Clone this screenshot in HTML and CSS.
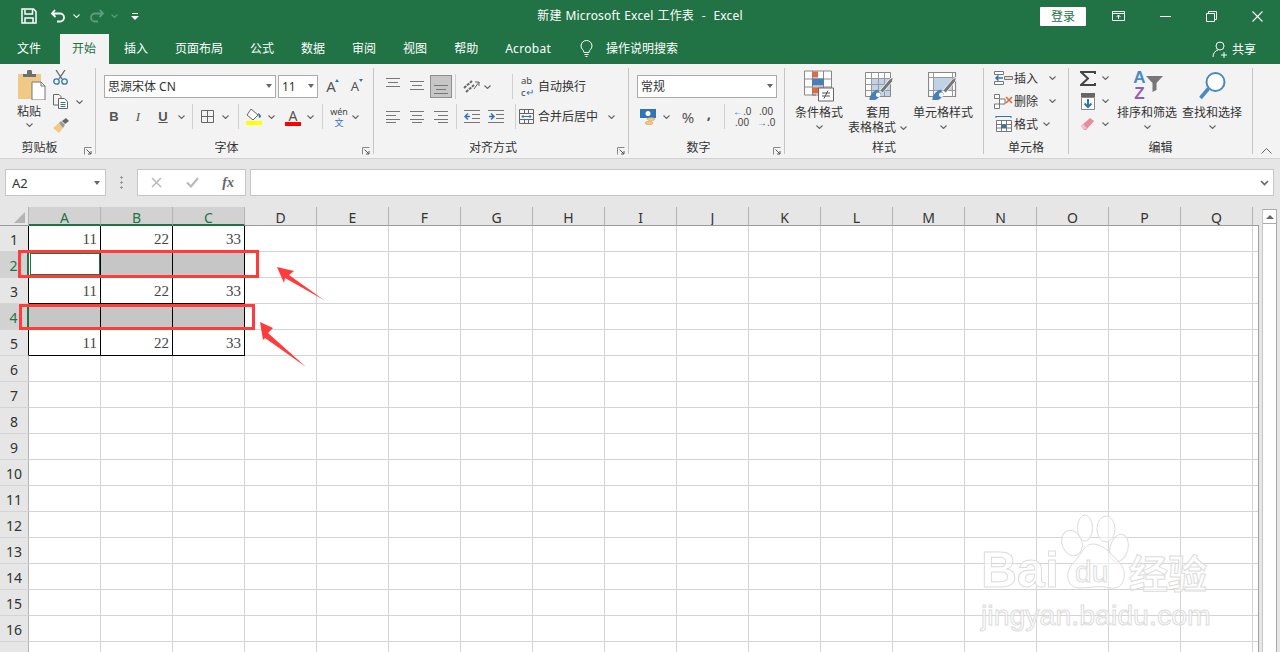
FILE: index.html
```html
<!DOCTYPE html>
<html lang="zh-CN">
<head>
  <meta charset="UTF-8">
  <title>新建 Microsoft Excel 工作表 - Excel</title>
  <link rel="stylesheet" href="styles.css">
</head>
<body>

  <!-- shared small glyphs -->
  <svg class="defs" width="0" height="0">
    <symbol id="chev" viewBox="0 0 7 4"><path d="M.5.5 3.5 3.5 6.5.5" fill="none" stroke="#666" stroke-width="1.1"/></symbol>
    <symbol id="launch" viewBox="0 0 8 8"><path d="M.5 7.5V.5H7.5" fill="none" stroke="#888"/><path d="M2.5 2.5 7 7M7 4V7H4" fill="none" stroke="#555"/></symbol>
    <symbol id="lines" viewBox="0 0 14 12"><path d="M0 .5H14M2 4.5H12M0 8.5H14" stroke="#777" fill="none"/></symbol>
    <symbol id="paint" viewBox="0 0 32 34">
      <path d="M4 33c0-6 4-10 9-12l4 5c-2 4-5 7-9 7z" fill="#4a7fb5"/>
      <circle cx="14" cy="27" r="2.6" fill="#fff"/>
      <path d="M16 22 27 9l4-2-1 5-11 13z" fill="#777" stroke="#f3f3f3"/>
    </symbol>
  </svg>

  <!-- Title bar -->
  <div class="titlebar">
    <div class="qat">
      <svg class="qat-save" width="16" height="16" viewBox="0 0 16 16"><path d="M1 1H12.5L15 3.5V15H1z" fill="none" stroke="#fff" stroke-width="1.5"/><path d="M4 1.5V6H11.5V1.5M4 15V10H12V15" fill="none" stroke="#fff" stroke-width="1.5"/></svg>
      <svg class="qat-undo" width="15" height="14" viewBox="0 0 15 14"><path d="M4 1 1 4.5 4.5 8M1.5 4.5H9a4 4 0 0 1 0 8H6" fill="none" stroke="#fff" stroke-width="1.8"/></svg>
      <svg class="qat-chev" width="7" height="4"><path d="M.5.5 3.5 3.5 6.5.5" fill="none" stroke="#dfe" stroke-width="1.1"/></svg>
      <svg class="qat-redo" width="15" height="14" viewBox="0 0 15 14"><path d="M11 1 14 4.5 10.5 8M13.5 4.5H6a4 4 0 0 0 0 8H9" fill="none" stroke="#5f9b7d" stroke-width="1.8"/></svg>
      <svg class="qat-chev" width="7" height="4"><path d="M.5.5 3.5 3.5 6.5.5" fill="none" stroke="#5f9b7d" stroke-width="1.1"/></svg>
      <svg class="qat-more" width="8" height="7" viewBox="0 0 8 7"><path d="M1 .5H7" stroke="#fff"/><path d="M0 3H8L4 7z" fill="#fff"/></svg>
    </div>
    <div class="doc-title">新建 Microsoft Excel 工作表&nbsp; -&nbsp; Excel</div>
    <div class="win-controls">
      <div class="login">登录</div>
      <svg class="win-display" width="13" height="10" viewBox="0 0 13 10"><path d="M.5.5H12.5V9.5H.5zM.5 2.5H12.5" fill="none" stroke="#fff"/><path d="M6.5 8V4M4.5 6 6.5 4 8.5 6" fill="none" stroke="#fff"/></svg>
      <svg class="win-min" width="11" height="1"><path d="M0 .5H11" stroke="#fff"/></svg>
      <svg class="win-max" width="11" height="11" viewBox="0 0 11 11"><path d="M.5 2.5H8.5V10.5H.5zM2.5 2.5V.5H10.5V8.5H8.5" fill="none" stroke="#fff"/></svg>
      <svg class="win-close" width="11" height="11" viewBox="0 0 11 11"><path d="M.5.5 10.5 10.5M10.5.5 .5 10.5" stroke="#fff" stroke-width="1.1"/></svg>
    </div>
  </div>

  <!-- Tabs -->
  <div class="tabs">
    <div class="tab tab-file">文件</div>
    <div class="tab active">开始</div>
    <div class="tab">插入</div>
    <div class="tab">页面布局</div>
    <div class="tab">公式</div>
    <div class="tab">数据</div>
    <div class="tab">审阅</div>
    <div class="tab">视图</div>
    <div class="tab">帮助</div>
    <div class="tab tab-latin">Acrobat</div>
    <svg class="bulb" width="13" height="17" viewBox="0 0 13 17"><path d="M4 12.5C4 10 1 9 1 6a5.5 5.5 0 0 1 11 0c0 3-3 4-3 6.5zM4.5 14.5H8.5M5.5 16.5H7.5" fill="none" stroke="#fff"/></svg>
    <div class="tab-search">操作说明搜索</div>
    <div class="share">
      <svg width="17" height="17" viewBox="0 0 17 17"><circle cx="8" cy="5" r="4" fill="none" stroke="#fff"/><path d="M1 16c0-4 2.5-6.5 5-7M12 11V17M9 14H15" fill="none" stroke="#fff"/></svg>
      共享
    </div>
  </div>

  <!-- Ribbon -->
  <div class="ribbon">

    <section class="group g-clip has-launcher">
      <div class="clip-body">
        <div class="paste">
          <svg width="29" height="30" viewBox="0 0 29 30">
            <path d="M1 4H24V29H1z" fill="#f0c987"/>
            <path d="M6 7V4H10V2a2.5 2.5 0 0 1 5 0V4H19V7z" fill="#6f6f6f"/>
            <path d="M15 12H24L28 16V30H15z" fill="#fff" stroke="#777"/><path d="M24 12V16H28" fill="none" stroke="#777"/>
          </svg>
          <span class="big-text">粘贴</span>
          <svg class="chev"><use href="#chev"/></svg>
        </div>
        <div class="clip-tools">
          <svg width="15" height="15" viewBox="0 0 15 15"><path d="M3 0 9 9M12 0 6 9" stroke="#666" stroke-width="1.3" fill="none"/><circle cx="3.5" cy="11.5" r="2.7" fill="none" stroke="#2f75b5" stroke-width="1.3"/><circle cx="11.5" cy="11.5" r="2.7" fill="none" stroke="#2f75b5" stroke-width="1.3"/></svg>
          <div class="tool-line">
            <svg width="15" height="15" viewBox="0 0 15 15"><path d="M.5.5H6L8 2.5V11H.5z" fill="#f3f3f3" stroke="#666"/><path d="M5.5 4.5H11.5L14.5 7.5V14.5H5.5z" fill="#fff" stroke="#666"/><path d="M7.5 8.5H12.5M7.5 10.5H12.5M7.5 12.5H12.5" stroke="#2f75b5"/></svg>
            <svg class="chev"><use href="#chev"/></svg>
          </div>
          <svg width="16" height="15" viewBox="0 0 16 15"><path d="M0 10 6 5 10 10 6 15C4 13 2 12 0 10z" fill="#f0c987"/><path d="M6 5 8 3 12 7 10 10z" fill="#999"/><path d="M9 3 13 0 16 3 12 6z" fill="#666"/></svg>
        </div>
      </div>
      <div class="group-label">剪贴板</div>
      <svg class="launcher"><use href="#launch"/></svg>
    </section>

    <section class="group g-font has-launcher">
      <div class="row row-top">
        <div class="combo combo-font">思源宋体 CN<i class="caret"></i></div>
        <div class="combo combo-size">11<i class="caret"></i></div>
        <div class="font-grow">A<i class="tri tri-up"></i></div>
        <div class="font-grow small">A<i class="tri tri-down"></i></div>
      </div>
      <div class="row row-low">
        <span class="tool fmt bold">B</span>
        <span class="tool fmt ital">I</span>
        <span class="tool fmt under">U</span>
        <svg class="chev chev-under"><use href="#chev"/></svg>
        <i class="vsep vsep-border"></i>
        <svg width="13" height="13" viewBox="0 0 13 13"><path d="M.5.5H12.5V12.5H.5zM6.5.5V12.5M.5 6.5H12.5" fill="none" stroke="#666"/></svg>
        <svg class="chev chev-border"><use href="#chev"/></svg>
        <i class="vsep vsep-fill"></i>
        <svg class="glyph-fill" width="16" height="16" viewBox="0 0 16 16"><path d="M5 0 12 6 7 11 1 6z" fill="#fff" stroke="#666"/><path d="M12 4c2 1 3 2 3 4l-2 1z" fill="#2f75b5"/><path d="M0 12H16V16H0z" fill="#ffff00"/></svg>
        <svg class="chev chev-fill"><use href="#chev"/></svg>
        <span class="font-color">A<i></i></span>
        <svg class="chev chev-color"><use href="#chev"/></svg>
        <i class="vsep vsep-wen"></i>
        <span class="wen">wén<b>文</b></span>
        <svg class="chev chev-wen"><use href="#chev"/></svg>
      </div>
      <div class="group-label">字体</div>
      <svg class="launcher"><use href="#launch"/></svg>
    </section>

    <section class="group g-align has-launcher">
      <div class="row row-top">
        <svg class="al al-first" width="14" height="12"><use href="#lines"/></svg>
        <svg class="al al-mid" width="14" height="12"><use href="#lines"/></svg>
        <div class="al-active"><svg width="14" height="12"><use href="#lines"/></svg></div>
        <i class="vsep vsep-orient"></i>
        <svg class="orient" width="17" height="15" viewBox="0 0 17 15"><path d="M1 9 9 2M3 13 11 6" stroke="#666" stroke-width="2" stroke-dasharray="3 1" fill="none"/><path d="M11 10 16 3M12 3H16V7" stroke="#666" fill="none"/></svg>
        <svg class="chev chev-orient"><use href="#chev"/></svg>
        <i class="vsep vsep-wrap"></i>
        <span class="wrap-ic">ab<br>c<em>↵</em></span>
        <span class="al-label">自动换行</span>
      </div>
      <div class="row row-low">
        <svg class="al al-first" width="14" height="12" viewBox="0 0 14 12"><path d="M0 .5H14M0 4.5H10M0 8.5H14M0 11.5H10" stroke="#777"/></svg>
        <svg class="al al-mid" width="14" height="12" viewBox="0 0 14 12"><path d="M0 .5H14M2 4.5H12M0 8.5H14M2 11.5H12" stroke="#777"/></svg>
        <svg class="al al-right" width="14" height="12" viewBox="0 0 14 12"><path d="M0 .5H14M4 4.5H14M0 8.5H14M4 11.5H14" stroke="#777"/></svg>
        <i class="vsep vsep-indent"></i>
        <svg class="indent" width="16" height="13" viewBox="0 0 16 13"><path d="M0 .5H16M8 4.5H16M8 8.5H16M0 12.5H16" stroke="#777"/><path d="M6 6.5H1M4 3.5 1 6.5 4 9.5" fill="none" stroke="#2f75b5" stroke-width="1.5"/></svg>
        <svg class="indent indent2" width="16" height="13" viewBox="0 0 16 13"><path d="M0 .5H16M8 4.5H16M8 8.5H16M0 12.5H16" stroke="#777"/><path d="M1 6.5H6M3 3.5 6 6.5 3 9.5" fill="none" stroke="#2f75b5" stroke-width="1.5"/></svg>
        <i class="vsep vsep-merge"></i>
        <svg class="merge" width="15" height="15" viewBox="0 0 15 15"><path d="M.5.5H14.5V14.5H.5zM.5 4.5H14.5M.5 10.5H14.5M5.5.5V4.5M9.5.5V4.5M5.5 10.5V14.5M9.5 10.5V14.5" fill="none" stroke="#666"/><path d="M3 7.5H12M4.5 6 3 7.5 4.5 9M10.5 6 12 7.5 10.5 9" fill="none" stroke="#2f75b5"/></svg>
        <span class="al-label">合并后居中</span>
        <svg class="chev chev-merge"><use href="#chev"/></svg>
      </div>
      <div class="group-label">对齐方式</div>
      <svg class="launcher"><use href="#launch"/></svg>
    </section>

    <section class="group g-num has-launcher">
      <div class="row row-top">
        <div class="combo combo-num">常规<i class="caret"></i></div>
      </div>
      <div class="row row-low">
        <svg width="17" height="16" viewBox="0 0 17 16"><path d="M0 0H16V9H0z" fill="#2f75b5"/><circle cx="8" cy="4.5" r="2.5" fill="#fff"/><ellipse cx="11" cy="10" rx="4" ry="1.5" fill="#f0c987" stroke="#c99a45" stroke-width=".5"/><ellipse cx="9" cy="14" rx="4" ry="1.7" fill="#f0c987" stroke="#c99a45" stroke-width=".5"/></svg>
        <svg class="chev chev-cur"><use href="#chev"/></svg>
        <span class="pct">%</span>
        <span class="comma">,</span>
        <i class="vsep vsep-dec"></i>
        <span class="dec"><em>←</em>.0<br>.00</span>
        <span class="dec">.00<br><em>→</em>.0</span>
      </div>
      <div class="group-label">数字</div>
      <svg class="launcher"><use href="#launch"/></svg>
    </section>

    <section class="group g-style">
      <div class="big-row">
        <div class="big big-cond">
          <svg width="30" height="31" viewBox="0 0 30 31">
            <path d="M.5.5H27.5V24.5H.5zM.5 8.5H27.5M.5 16.5H27.5M8.5.5V24.5M19.5.5V24.5" fill="#fff" stroke="#888"/>
            <path d="M8 1H14V7H8zM8 17H19V23H8z" fill="#dc6a47"/><path d="M8 8H20V15H8zM8 24H12V25H8z" fill="#4a7fb5"/>
            <path d="M14.5 17.5H29.5V30.5H14.5z" fill="#fff" stroke="#666"/>
            <path d="M18 22.5H26M18 25.5H26M24 20 20 28" stroke="#555" fill="none"/>
          </svg>
          <span class="big-text">条件格式</span>
          <svg class="chev"><use href="#chev"/></svg>
        </div>
        <div class="big big-table">
          <svg width="30" height="30" viewBox="0 0 30 30">
            <path d="M.5 1.5H25.5V25.5H.5z" fill="#fff" stroke="#888"/>
            <path d="M7 8H25V25H7z" fill="#bfd2e8"/>
            <path d="M.5 7.5H25.5M.5 13.5H25.5M.5 19.5H25.5M6.5 1.5V25.5M13.5 1.5V25.5M19.5 1.5V25.5" fill="none" stroke="#999"/>
            <use href="#paint" x="0" y="0" width="30" height="30"/>
          </svg>
          <span class="big-text table-top">套用</span>
          <span class="big-text table-low">表格格式<svg class="chev chev-inline"><use href="#chev"/></svg></span>
        </div>
        <div class="big big-cell">
          <svg width="30" height="30" viewBox="0 0 30 30">
            <path d="M.5 1.5H27.5V25.5H.5z" fill="#fff" stroke="#888" stroke-width="1.2"/>
            <path d="M5.5 6.5H24V19H5.5z" fill="#bfd2e8"/>
            <path d="M.5 6.5H27.5M.5 19.5H27.5M5.5 1.5V25.5M24.5 1.5V25.5" fill="none" stroke="#999"/>
            <use href="#paint" x="0" y="0" width="30" height="30"/>
          </svg>
          <span class="big-text">单元格样式</span>
          <svg class="chev"><use href="#chev"/></svg>
        </div>
      </div>
      <div class="group-label">样式</div>
    </section>

    <section class="group g-cells">
      <div class="cell-tool">
        <svg width="20" height="14" viewBox="0 0 20 14"><path d="M.5.5H9.5V3.5H.5zM.5 10.5H9.5V13.5H.5z" fill="#fff" stroke="#777"/><path d="M10.5 5.5H18.5V8.5H10.5z" fill="#ddd" stroke="#777"/><path d="M9 7H2M4.5 4.5 2 7 4.5 9.5" stroke="#2f75b5" stroke-width="1.5" fill="none"/></svg>
        <span>插入</span><svg class="chev chev-insert"><use href="#chev"/></svg>
      </div>
      <div class="cell-tool">
        <svg width="20" height="15" viewBox="0 0 20 15"><path d="M.5.5H5.5V4.5H.5zM.5 10H5.5V14.5H.5zM5.5 5H11V10H5.5z" fill="#fff" stroke="#777"/><path d="M12 3 18 9M18 3 12 9" stroke="#dc6a47" stroke-width="1.6"/></svg>
        <span>删除</span><svg class="chev chev-insert"><use href="#chev"/></svg>
      </div>
      <div class="cell-tool">
        <svg width="16" height="16" viewBox="0 0 16 16"><path d="M0 .5H15M0 0V2M15 0V2" stroke="#2f75b5"/><path d="M.5 4.5H15.5V15.5H.5zM.5 8.5H15.5M.5 12H15.5M5.5 4.5V15.5M10.5 4.5V15.5" fill="#fff" stroke="#777"/><path d="M5 9H10V12H5z" fill="#2f75b5"/></svg>
        <span>格式</span><svg class="chev chev-format"><use href="#chev"/></svg>
      </div>
      <div class="group-label">单元格</div>
    </section>

    <section class="group g-edit">
      <div class="edit-body">
        <div class="edit-tools">
          <div class="edit-line">
            <svg width="16" height="15" viewBox="0 0 16 15"><path d="M15 3V1H1L8 7.5 1 14H15V12" fill="none" stroke="#444" stroke-width="2"/></svg>
            <svg class="chev"><use href="#chev"/></svg>
          </div>
          <div class="edit-line">
            <svg width="14" height="17" viewBox="0 0 14 17"><path d="M0 0H14V4H0z" fill="#666"/><path d="M.5 4.5H13.5V16.5H.5z" fill="#fff" stroke="#888"/><path d="M7 6V14M3.5 10.5 7 14 10.5 10.5" fill="none" stroke="#2f75b5" stroke-width="2"/></svg>
            <svg class="chev"><use href="#chev"/></svg>
          </div>
          <div class="edit-line">
            <svg width="14" height="14" viewBox="0 0 14 14"><path d="M0 9 9 1 13 4 5 13H3z" fill="#e98a9b"/><path d="M6 11 3 13 0 9 2 7z" fill="#f3c1ca"/></svg>
            <svg class="chev"><use href="#chev"/></svg>
          </div>
        </div>
        <div class="big big-sort">
          <div class="sort-ic"><span class="az"><b>A</b><b class="z">Z</b></span>
            <svg width="17" height="17" viewBox="0 0 17 17"><path d="M0 1H17L10.5 8V15L6.5 17V8z" fill="#777"/></svg>
          </div>
          <span class="big-text">排序和筛选</span>
          <svg class="chev"><use href="#chev"/></svg>
        </div>
        <div class="big big-find">
          <svg width="28" height="29" viewBox="0 0 28 29"><circle cx="17.5" cy="10.5" r="9" fill="#fff" stroke="#4a8ac4" stroke-width="2"/><path d="M10.5 17 2.5 26.5" stroke="#4a8ac4" stroke-width="3.5"/></svg>
          <span class="big-text">查找和选择</span>
          <svg class="chev"><use href="#chev"/></svg>
        </div>
      </div>
      <div class="group-label">编辑</div>
    </section>

    <svg class="collapse" width="11" height="6" viewBox="0 0 11 6"><path d="M.5 5.5 5.5.5 10.5 5.5" fill="none" stroke="#666"/></svg>
  </div>

  <!-- Formula bar -->
  <div class="formula-bar">
    <div class="name-box">A2<i class="caret"></i></div>
    <div class="grip"></div>
    <div class="fx-box">
      <svg width="11" height="11" viewBox="0 0 11 11"><path d="M1 1 10 10M10 1 1 10" stroke="#b8b8b8" stroke-width="1.5"/></svg>
      <svg width="13" height="11" viewBox="0 0 13 11"><path d="M1 5.5 5 9.5 12 1" fill="none" stroke="#b8b8b8" stroke-width="2"/></svg>
      <span class="fx">fx</span>
    </div>
    <div class="formula-input"><svg width="9" height="6" viewBox="0 0 9 6"><path d="M1 1 4.5 4.5 8 1" fill="none" stroke="#666" stroke-width="1.6"/></svg></div>
  </div>

  <!-- Sheet -->
  <div class="sheet-area">
    <div class="grid">
      <div class="corner"><svg width="11" height="11"><path d="M11 0V11H0z" fill="#b4b4b4"/></svg></div>
      <div class="col sel">A</div><div class="col sel">B</div><div class="col sel">C</div>
      <div class="col">D</div><div class="col">E</div><div class="col">F</div><div class="col">G</div>
      <div class="col">H</div><div class="col">I</div><div class="col">J</div><div class="col">K</div>
      <div class="col">L</div><div class="col">M</div><div class="col">N</div><div class="col">O</div>
      <div class="col">P</div><div class="col">Q</div><div class="col col-rest"></div>

      <div class="rh data">1</div><div class="cell">11</div><div class="cell">22</div><div class="cell">33</div>
      <div class="rh data sel">2</div><div class="cell active"><div class="cursor"></div></div><div class="cell grey"></div><div class="cell grey"></div>
      <div class="rh data">3</div><div class="cell">11</div><div class="cell">22</div><div class="cell">33</div>
      <div class="rh data sel">4</div><div class="cell grey"></div><div class="cell grey"></div><div class="cell grey"></div>
      <div class="rh data">5</div><div class="cell">11</div><div class="cell">22</div><div class="cell">33</div>
      <div class="rh">6</div>
      <div class="rh">7</div>
      <div class="rh">8</div>
      <div class="rh">9</div>
      <div class="rh">10</div>
      <div class="rh">11</div>
      <div class="rh">12</div>
      <div class="rh">13</div>
      <div class="rh">14</div>
      <div class="rh">15</div>
      <div class="rh">16</div>
      <div class="rh"></div>

      <!-- annotations drawn over the grid -->
      <div class="mark mark-1"></div>
      <div class="mark mark-2"></div>
      <svg class="arrows" width="340" height="180" viewBox="0 207 340 180">
        <path d="M277 267 294 271 289 275 324 300 285 278 284 283z" fill="#ff3b3b"/>
        <path d="M260 322 273 328 268 333 306 367 265 338 263 340z" fill="#ff3b3b"/>
      </svg>

      <!-- watermark -->
      <div class="watermark">
        <svg class="wm-paw" width="70" height="80" viewBox="0 0 70 80">
          <g fill="rgba(255,255,255,.5)" stroke="#dcdcdc">
            <ellipse cx="12" cy="31" rx="10" ry="13" transform="rotate(-20 12 31)"/>
            <ellipse cx="25" cy="16" rx="7.5" ry="13"/>
            <ellipse cx="46" cy="17" rx="9" ry="13"/>
            <ellipse cx="59" cy="36" rx="9" ry="14" transform="rotate(15 59 36)"/>
            <path d="M33 32C24 32 22 42 14 50 4 60 6 76 20 76 30 76 38 73 50 76 62 78 68 66 62 54 54 44 44 32 33 32z"/>
          </g>
        </svg>
        <span class="wm-bai">Bai</span>
        <span class="wm-du">du</span>
        <span class="wm-jy">经验</span>
        <span class="wm-url">jingyan.baidu.com</span>
      </div>
    </div>
    <div class="gutter"></div>
    <div class="scrollbar"><div class="scroll-up"><i></i></div></div>
  </div>

</body>
</html>
```

FILE: styles.css
```css
* {
  box-sizing: border-box;
}

html, body {
  margin: 0;
  height: 652px;
  overflow: hidden;
}

body {
  display: flex;
  flex-direction: column;
  font-family: "Noto Sans", "Noto Sans CJK SC", sans-serif;
  font-size: 12px;
  color: #333;
  background-color: #e6e6e6;
}

i, em {
  font-style: normal;
}

.defs {
  position: absolute;
}

/* Title bar */
.titlebar {
  flex: none;
  height: 32px;
  background-color: #217346;
  color: white;
  display: grid;
  grid-template-columns: 1fr auto 1fr;
  align-items: center;
}

.qat {
  display: flex;
  align-items: center;
  padding-left: 21px;
}

.qat-undo { margin-left: 14px; }
.qat-chev { margin-left: 7px; }
.qat-redo { margin-left: 9px; }
.qat-more { margin-left: 13px; }

.doc-title {
  font-size: 12px;
  line-height: 32px;
  word-spacing: 0.5px;
  letter-spacing: 0.2px;
  white-space: nowrap;
}

.win-controls {
  display: flex;
  align-items: center;
  justify-content: flex-end;
  padding-right: 17px;
}

.login {
  width: 46px;
  height: 19px;
  line-height: 19px;
  text-align: center;
  background-color: white;
  color: #217346;
  border-radius: 1px;
}

.win-display { margin-left: 26px; }
.win-min { margin-left: 35px; }
.win-max { margin-left: 35px; }
.win-close { margin-left: 35px; }

/* Tabs */
.tabs {
  flex: none;
  height: 32px;
  padding-left: 3.5px;
  background-color: #217346;
  color: white;
  display: flex;
  align-items: flex-end;
}

.tab {
  height: 30px;
  line-height: 29px;
  padding: 0 13.5px;
  white-space: nowrap;
}

.tab-file {
  margin-right: 5px;
}

.tab-latin {
  letter-spacing: 0.3px;
}

.tab.active {
  background-color: #f3f3f3;
  color: #217346;
  padding: 0 12.5px;
  margin-right: 2px;
}

.bulb {
  margin: 0 13px 7px 15.5px;
}

.tab-search {
  height: 30px;
  line-height: 29px;
}

.share {
  margin-left: auto;
  height: 30px;
  padding-right: 24px;
  display: flex;
  align-items: center;
  gap: 3px;
}

/* Ribbon */
.ribbon {
  flex: none;
  height: 95px;
  padding-bottom: 4px;
  background-color: #f3f3f3;
  border-bottom: 1px solid #d2d2d2;
  display: flex;
  align-items: flex-end;
}

.group {
  position: relative;
  height: 86px;
  border-right: 1px solid #c6c6c6;
  flex: none;
}

.group-label {
  position: absolute;
  left: 0;
  right: 0;
  bottom: -2px;
  height: 16px;
  line-height: 16px;
  text-align: center;
}

.has-launcher .group-label {
  right: 16px;
}

.launcher {
  position: absolute;
  right: 3px;
  bottom: -1px;
  width: 8px;
  height: 8px;
}

.g-clip { width: 96px; }
.g-font { width: 278px; }
.g-align { width: 255px; }
.g-num { width: 156px; }
.g-style { width: 199px; }
.g-cells { width: 85px; }
.g-edit { width: 184px; }

.chev {
  width: 7px;
  height: 4px;
  flex: none;
  display: block;
}

.vsep {
  width: 1px;
  height: 25px;
  flex: none;
  background-color: #d0d0d0;
}

.row {
  display: flex;
  align-items: center;
}

.row-top {
  height: 23px;
  margin-top: 7px;
}

.row-low {
  height: 25px;
  margin-top: 6px;
}

.caret {
  width: 0;
  height: 0;
  border-left: 3.5px solid transparent;
  border-right: 3.5px solid transparent;
  border-top: 4px solid #666;
}

.combo {
  height: 23px;
  padding: 0 3px 1px;
  background-color: white;
  border: 1px solid #ababab;
  display: flex;
  align-items: center;
  justify-content: space-between;
  flex: none;
}

/* Clipboard */
.clip-body {
  display: flex;
  padding: 2px 0 0 16px;
}

.paste {
  width: 30px;
  display: flex;
  flex-direction: column;
  align-items: center;
}

.paste .big-text {
  margin-top: 4px;
  margin-left: -4px;
}

.paste .chev {
  margin: 4px 0 0 -4px;
}

.clip-tools {
  margin-left: 7px;
  display: flex;
  flex-direction: column;
  gap: 9px;
}

.tool-line {
  display: flex;
  align-items: center;
  gap: 8px;
}

.big-text {
  display: block;
  line-height: 15px;
  white-space: nowrap;
  color: #333;
}

/* Font */
.g-font .row-top {
  padding-left: 8px;
}

.combo-font {
  width: 172px;
}

.combo-size {
  width: 40px;
  margin-left: 2px;
}

.font-grow {
  position: relative;
  width: 24px;
  margin-left: 1px;
  text-align: center;
  font-size: 15px;
  line-height: 23px;
  color: #555;
}

.font-grow.small {
  margin-left: 0;
  font-size: 13px;
}

.tri {
  position: absolute;
  top: 4px;
  right: 4px;
  width: 0;
  height: 0;
  border-left: 2.5px solid transparent;
  border-right: 2.5px solid transparent;
}

.tri-up { border-bottom: 3px solid #2f75b5; }
.tri-down { border-top: 3px solid #2f75b5; }

.g-font .row-low {
  padding-left: 6px;
}

.tool {
  width: 24px;
  text-align: center;
  font-size: 13px;
  color: #555;
}

.fmt { font-family: "Liberation Sans", sans-serif; }
.bold { font-weight: bold; }
.ital { font-style: italic; font-family: "Liberation Serif", serif; }
.under { text-decoration: underline; font-weight: bold; margin-left: 1px; }

.chev-under { margin-left: 3px; }
.vsep-border { margin: 0 8px 0 7px; }
.chev-border { margin-left: 8px; }
.vsep-fill { margin-left: 9px; }
.glyph-fill { margin-left: 7px; }
.chev-fill { margin-left: 6px; }

.font-color {
  position: relative;
  width: 16px;
  margin-left: 10px;
  height: 18px;
  text-align: center;
  font-size: 14px;
  line-height: 15px;
  color: #555;
}

.font-color i {
  position: absolute;
  left: 0;
  right: 0;
  bottom: 0;
  height: 4px;
  background-color: #ff0000;
}

.chev-color { margin-left: 6px; }
.vsep-wen { margin-left: 8px; }

.wen {
  width: 22px;
  margin-left: 5px;
  text-align: center;
  font-size: 9px;
  line-height: 11px;
  color: #444;
}

.wen b {
  display: block;
  font-weight: normal;
  color: #2f75b5;
}

.chev-wen { margin-left: 2px; }

/* Alignment */
.g-align .row {
  padding-left: 12px;
}

.row-top .al-first { margin-bottom: 6px; }

.al-mid { margin-left: 10px; }

.al-active {
  width: 22px;
  height: 23px;
  margin-left: 6px;
  background-color: #c6c6c6;
  border: 1px solid #8f8f8f;
  display: flex;
  align-items: flex-end;
  justify-content: center;
}

.al-right { margin-left: 10px; }

.vsep-orient { margin-left: 3px; }

.orient { margin-left: 7px; }

.chev-orient { margin-left: 4px; }

.vsep-wrap { margin-left: 21px; }

.wrap-ic {
  width: 13px;
  margin-left: 8px;
  font-size: 9.5px;
  line-height: 12px;
  white-space: nowrap;
  color: #444;
}

.wrap-ic em {
  color: #2f75b5;
}

.al-label {
  margin-left: 4px;
  padding-bottom: 1px;
  white-space: nowrap;
  color: #333;
}

.vsep-indent { margin-left: 8px; }

.indent { margin-left: 7px; }
.indent2 { margin-left: 8px; }

.vsep-merge { margin-left: 11px; }

.merge { margin-left: 3px; }
.merge + .al-label { margin-left: 4px; }

.chev-merge { margin-left: 10px; }

/* Number */
.g-num .row {
  padding-left: 8px;
}

.combo-num {
  width: 140px;
}

.g-num .row-low {
  padding-left: 11px;
}

.chev-cur { margin-left: 6px; }

.pct {
  width: 16px;
  margin-left: 10px;
  text-align: center;
  font-size: 15px;
  color: #555;
}

.comma {
  width: 10px;
  margin: 0 0 8px 8px;
  text-align: center;
  font-size: 15px;
  font-weight: bold;
  line-height: 18px;
  color: #555;
}

.vsep-dec { margin-left: 10px; }

.dec {
  width: 16px;
  margin-left: 8px;
  font-family: "Liberation Sans", sans-serif;
  font-size: 10px;
  line-height: 11px;
  text-align: right;
  white-space: nowrap;
  color: #444;
}

.dec em {
  color: #2f75b5;
  font-weight: bold;
}

/* Large buttons */
.big-row {
  display: flex;
}

.big {
  display: flex;
  flex-direction: column;
  align-items: center;
}

.big > svg:first-child {
  height: 32px;
  margin-top: 2px;
}

.big > .big-text:nth-child(2) {
  margin-top: 3px;
}

.big > .chev {
  margin-top: 5px;
}

.chev-inline {
  display: inline-block;
  margin-left: 4px;
  vertical-align: 2px;
}

.big-cond {
  width: 48px;
  margin-left: 10px;
}

.big-table {
  width: 48px;
  margin-left: 5px;
}

.big-table > svg:first-child {
  margin-left: 16px;
}

.table-top {
  margin-left: 12px;
}

.table-low {
  margin-left: 11px;
}

.big-cell {
  width: 60px;
  margin-left: 17px;
}

/* Cells */
.cell-tool {
  height: 20px;
  margin-bottom: 3px;
  padding-left: 10px;
  display: flex;
  align-items: center;
}

.cell-tool > svg:first-child {
  width: 20px;
}

.cell-tool span {
  color: #333;
}

.chev-insert { margin-left: 11px; }
.chev-format { margin-left: 5px; }

/* Editing */
.edit-body {
  display: flex;
}

.edit-tools {
  width: 47px;
}

.edit-line {
  height: 20px;
  margin-bottom: 3px;
  padding-left: 11px;
  display: flex;
  align-items: center;
}

.edit-line > svg:first-child {
  width: 16px;
}

.edit-line .chev {
  margin-left: 6px;
}

.big-sort {
  width: 60px;
  margin-left: 1px;
}

.sort-ic {
  height: 32px;
  margin-top: 2px;
  display: flex;
  align-items: center;
}

.sort-ic svg {
  margin: 0 0 5px -2px;
}

.az {
  width: 16px;
  text-align: center;
  font-family: "Liberation Sans", sans-serif;
  font-size: 17px;
  line-height: 16px;
}

.az b {
  display: block;
  font-weight: bold;
  color: #4a8ac4;
}

.az .z {
  color: #8e5fb5;
}

.big-find {
  width: 60px;
  margin-left: 5px;
}

.collapse {
  margin: 0 0 0 8px;
  align-self: flex-end;
}

/* Formula bar */
.formula-bar {
  flex: none;
  height: 48px;
  padding: 10px 6px 11px 5px;
  display: flex;
}

.name-box {
  width: 101px;
  padding: 0 5px 0 6px;
  background-color: white;
  border: 1px solid #c6c6c6;
  font-size: 13px;
  display: flex;
  align-items: center;
  justify-content: space-between;
}

.grip {
  width: 31px;
  margin: 7px 0;
  background: radial-gradient(circle, #9a9a9a 1px, transparent 1.2px) center / 3px 5px repeat-y;
}

.fx-box {
  width: 109px;
  padding: 0 11px 0 13px;
  background-color: white;
  border: 1px solid #c6c6c6;
  display: flex;
  align-items: center;
  justify-content: space-between;
}

.fx {
  font-family: "Liberation Serif", serif;
  font-style: italic;
  font-weight: bold;
  font-size: 14px;
  color: #666;
}

.formula-input {
  flex: 1;
  margin-left: 4px;
  padding-right: 4px;
  background-color: white;
  border: 1px solid #c6c6c6;
  display: flex;
  align-items: center;
  justify-content: flex-end;
}

/* Sheet */
.sheet-area {
  flex: 1;
  min-height: 0;
  display: flex;
  overflow: hidden;
}

.grid {
  position: relative;
  flex: none;
  width: 1259px;
  display: grid;
  grid-template-columns: 29px repeat(17, 72px) 6px;
  grid-template-rows: 19px;
  grid-auto-rows: 26px;
  background-color: white;
  background-image:
    linear-gradient(to left, #d4d4d4 1px, transparent 1px),
    linear-gradient(to top, #d4d4d4 1px, transparent 1px);
  background-size: 72px 26px;
  background-position: 29px 19px;
  border-right: 1px solid #a0a0a0;
}

.corner {
  background-color: #e6e6e6;
  border-right: 1px solid #b4b4b4;
  border-bottom: 1px solid #9a9a9a;
  padding: 5px 0 0 14px;
}

.corner svg {
  display: block;
}

.col {
  background-color: #e6e6e6;
  border-right: 1px solid #b4b4b4;
  border-bottom: 1px solid #9a9a9a;
  text-align: center;
  font-size: 14px;
  line-height: 21px;
  color: #333;
  overflow: hidden;
}

.col.sel {
  background-color: #d2d2d2;
  border-bottom: 2px solid #217346;
  color: #217346;
}

.col-rest {
  border-right: none;
}

.rh {
  grid-column: 1;
  background-color: #e6e6e6;
  border-right: 1px solid #b4b4b4;
  border-bottom: 1px solid #d4d4d4;
  text-align: center;
  font-size: 14px;
  line-height: 27px;
  color: #333;
}

.rh.data {
  border-right-color: #000;
}

.rh.sel {
  background-color: #d2d2d2;
  border-right: 2px solid #217346;
  color: #217346;
}

.cell {
  border-right: 1px solid #000;
  border-bottom: 1px solid #000;
  padding-right: 3px;
  text-align: right;
  font-family: "Liberation Serif", serif;
  font-size: 15px;
  line-height: 26px;
  color: #444;
}

.cell.grey {
  background-color: #c6c6c6;
}

.cell.active {
  padding: 1px;
  background-color: white;
}

.cursor {
  width: 70px;
  height: 22px;
  border: 1px solid #217346;
}

.mark {
  position: absolute;
  border: 3px solid #ff3b3b;
}

.mark-1 {
  left: 18px;
  top: 43px;
  width: 241px;
  height: 28px;
}

.mark-2 {
  left: 19px;
  top: 97px;
  width: 236px;
  height: 26px;
}

.arrows {
  position: absolute;
  left: 0;
  top: 0;
}

/* Baidu watermark */
.watermark {
  position: absolute;
  left: 975px;
  top: 305px;
  width: 250px;
  height: 130px;
}

.watermark span {
  position: absolute;
  font-family: "Liberation Sans", sans-serif;
  color: rgba(255, 255, 255, 0.55);
  -webkit-text-stroke: 1px #dcdcdc;
  white-space: nowrap;
}

.wm-paw {
  position: absolute;
  left: 85px;
  top: 0;
}

.wm-bai {
  left: 6px;
  top: 28px;
  font-size: 50px;
  line-height: 60px;
  font-weight: bold;
}

.wm-du {
  left: 100px;
  top: 42px;
  font-size: 30px;
  line-height: 36px;
}

.watermark .wm-jy {
  left: 154px;
  top: 34px;
  font-family: "Noto Sans CJK SC", sans-serif;
  font-size: 39px;
  line-height: 50px;
  font-weight: bold;
}

.wm-url {
  left: 6px;
  top: 85px;
  font-size: 28.5px;
  line-height: 36px;
}

.gutter {
  width: 3px;
  flex: none;
}

.scrollbar {
  width: 15px;
  flex: none;
  margin-top: 2px;
  background-color: white;
  border-left: 1px solid #c6c6c6;
  border-right: 1px solid #ababab;
  border-top: 1px solid #ababab;
}

.scroll-up {
  height: 14px;
  border-bottom: 1px solid #ababab;
  display: flex;
  align-items: center;
  justify-content: center;
}

.scroll-up i {
  width: 0;
  height: 0;
  border-left: 4px solid transparent;
  border-right: 4px solid transparent;
  border-bottom: 4px solid #666;
}
```
